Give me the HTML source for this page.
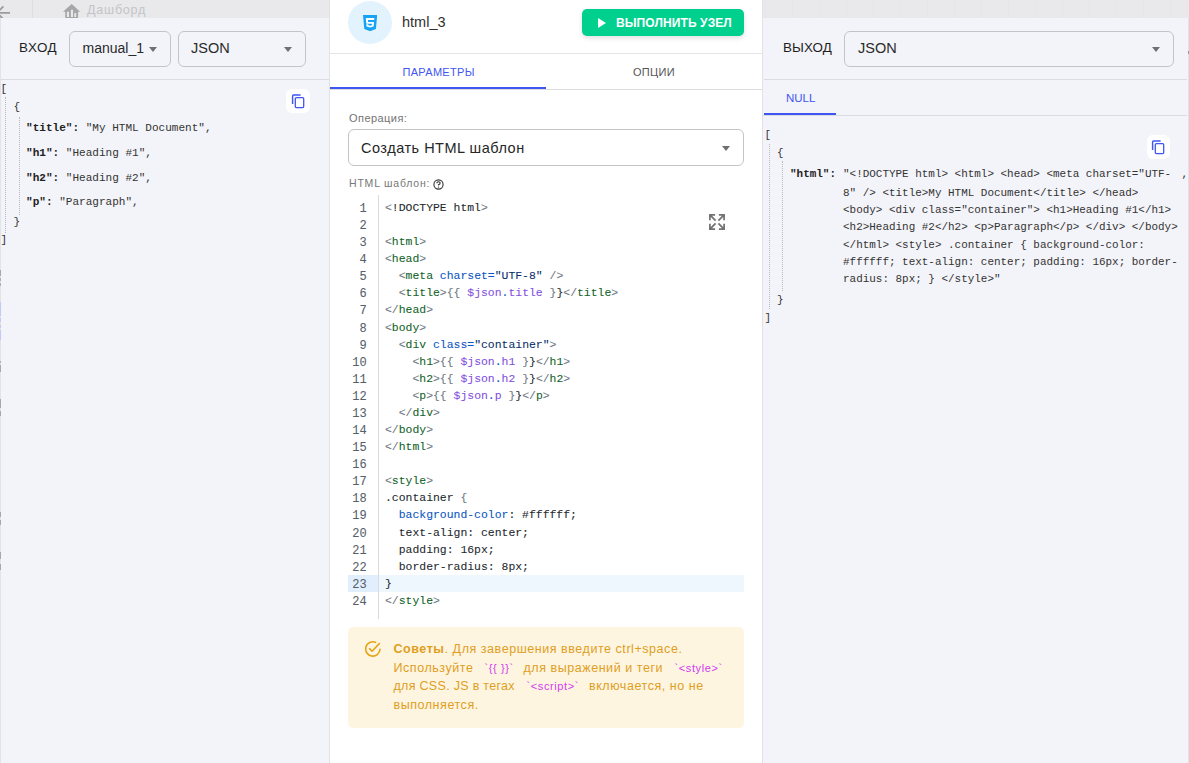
<!DOCTYPE html>
<html><head><meta charset="utf-8">
<style>
*{box-sizing:border-box;margin:0;padding:0}
html,body{width:1189px;height:763px;overflow:hidden;background:#f3f4f9;font-family:"Liberation Sans",sans-serif;color:#222}
.a{position:absolute;white-space:nowrap}
#topbar{left:0;top:0;width:1189px;height:18px;background:#e9e9eb}
#left{left:0;top:18px;width:329px;height:745px;background:#f3f4f9;border-left:1px solid #e3e3e6}
#lsep{left:329px;top:0;width:1px;height:763px;background:#e2e2e4}
#mid{left:330px;top:0;width:432px;height:763px;background:#fff}
#rsep{left:762px;top:0;width:1px;height:763px;background:#e2e2e4}
#right{left:763px;top:18px;width:426px;height:745px;background:#f3f4f9}
.sel{border:1px solid #c4c4c8;border-radius:6px}
.caret{position:absolute;width:0;height:0;border-left:4.5px solid transparent;border-right:4.5px solid transparent;border-top:5px solid #707070}
.mono{font-family:"Liberation Mono",monospace}
.hl{position:absolute;left:0;height:1px}
.code{font-family:"Liberation Mono",monospace;font-size:11.43px;line-height:17px;-webkit-text-stroke:0.08px}
.ln{position:absolute;left:348px;width:18.6px;text-align:right;color:#57606a;font-size:12px;margin-top:2px}
.cl{position:absolute;left:385px;color:#24292f}
.t{color:#116329}.b{color:#6e7781}.at{color:#0a56c2}.s{color:#0a3069}.v{color:#8250df}
.j{font-family:"Liberation Mono",monospace;color:#333}
.jk{font-weight:bold;color:#222}
.tip{font-size:12.5px;line-height:15px;color:#df9e1e;letter-spacing:0.55px}
.tc{font-size:11px;line-height:13px;color:#d33af0;letter-spacing:0.6px}
.dot{position:absolute;width:0;border-left:1px dotted #b9b9bd}
</style></head><body>
<div id="topbar" class="a"></div>
<div id="left" class="a"></div>
<div id="lsep" class="a"></div>
<div id="mid" class="a"></div>
<div id="rsep" class="a"></div>
<div id="right" class="a"></div>

<!-- top bar content -->
<div class="a" style="left:765px;top:0;width:1px;height:18px;background:#e6e6e8"></div><div class="a" style="left:792px;top:0;width:1px;height:18px;background:#e6e6e8"></div><div class="a" style="left:819px;top:0;width:1px;height:18px;background:#e6e6e8"></div><div class="a" style="left:846px;top:0;width:1px;height:18px;background:#e6e6e8"></div><div class="a" style="left:873px;top:0;width:1px;height:18px;background:#e6e6e8"></div><div class="a" style="left:900px;top:0;width:1px;height:18px;background:#e6e6e8"></div><div class="a" style="left:927px;top:0;width:1px;height:18px;background:#e6e6e8"></div><div class="a" style="left:954px;top:0;width:1px;height:18px;background:#e6e6e8"></div><div class="a" style="left:981px;top:0;width:1px;height:18px;background:#e6e6e8"></div><div class="a" style="left:1008px;top:0;width:1px;height:18px;background:#e6e6e8"></div><div class="a" style="left:1035px;top:0;width:1px;height:18px;background:#e6e6e8"></div><div class="a" style="left:1062px;top:0;width:1px;height:18px;background:#e6e6e8"></div><div class="a" style="left:1089px;top:0;width:1px;height:18px;background:#e6e6e8"></div><div class="a" style="left:1116px;top:0;width:1px;height:18px;background:#e6e6e8"></div><div class="a" style="left:1143px;top:0;width:1px;height:18px;background:#e6e6e8"></div><div class="a" style="left:1170px;top:0;width:1px;height:18px;background:#e6e6e8"></div>
<svg class="a" style="left:0;top:0" width="12" height="18" viewBox="0 0 12 18"><path d="M10 12.8H-3M3.4 6.3L-3 12.8L3.4 19.3" stroke="#9c9c9c" stroke-width="1.8" fill="none"/></svg>
<div class="a" style="left:32px;top:0;width:1px;height:18px;background:#dedee0"></div>
<svg class="a" style="left:60px;top:0" width="22" height="18" viewBox="0 0 22 18"><path d="M3 11.7L11.7 3.9L20.2 11.7Z" fill="#a6a6a6"/><rect x="5.2" y="11.2" width="12.9" height="6.8" fill="#a6a6a6"/><rect x="6.9" y="11.8" width="2.1" height="5.2" fill="#e9e9eb"/><rect x="10.9" y="9.8" width="2.1" height="7.2" fill="#e9e9eb"/><rect x="14.3" y="13.1" width="1.9" height="3.9" fill="#e9e9eb"/></svg>
<div class="a" style="left:87px;top:2.5px;font-size:12.6px;color:#c4c4c8;letter-spacing:0.75px">Дашборд</div>

<!-- LEFT PANEL -->
<div class="a" style="left:0;top:269.8px;width:1px;height:6.6px;background:#a8a8aa"></div><div class="a" style="left:0;top:278.3px;width:1px;height:2.7px;background:#b0b0b2"></div><div class="a" style="left:0;top:283.0px;width:1px;height:2.6px;background:#b0b0b2"></div><div class="a" style="left:0;top:302.0px;width:1px;height:14.4px;background:#c4c8f4"></div><div class="a" style="left:0;top:318.3px;width:1px;height:4.0px;background:#c4c8f4"></div><div class="a" style="left:0;top:325.0px;width:1px;height:3.0px;background:#c4c8f4"></div><div class="a" style="left:0;top:330.0px;width:1px;height:10.0px;background:#c4c8f4"></div><div class="a" style="left:0;top:361.3px;width:1px;height:2.0px;background:#b0b0b2"></div><div class="a" style="left:0;top:364.6px;width:1px;height:7.2px;background:#a8a8aa"></div><div class="a" style="left:0;top:399.3px;width:1px;height:9.2px;background:#a8a8aa"></div><div class="a" style="left:0;top:411.0px;width:1px;height:4.7px;background:#a8a8aa"></div><div class="a" style="left:0;top:512.3px;width:1px;height:4.6px;background:#a8a8aa"></div><div class="a" style="left:0;top:519.6px;width:1px;height:5.5px;background:#a8a8aa"></div><div class="a" style="left:0;top:551.7px;width:1px;height:7.3px;background:#a8a8aa"></div><div class="a" style="left:0;top:563.7px;width:1px;height:6.4px;background:#a8a8aa"></div>
<div class="a" style="left:19px;top:40px;font-size:13.4px;color:#1f1f1f;letter-spacing:0.55px">ВХОД</div>
<div class="a sel" style="left:69px;top:31px;width:102px;height:36px"></div>
<div class="a" style="left:82.5px;top:40px;font-size:14px;color:#2a2a2a">manual_1</div>
<div class="caret" style="left:149px;top:46.5px"></div>
<div class="a sel" style="left:178px;top:31px;width:128px;height:36px"></div>
<div class="a" style="left:191px;top:40px;font-size:14.5px;color:#2a2a2a">JSON</div>
<div class="caret" style="left:284px;top:46.5px"></div>
<div class="a" style="left:1px;top:79px;width:328px;height:1px;background:#dcdce0"></div>

<div class="a" style="left:286px;top:89px;width:24px;height:24px;background:#fff;border-radius:6px"></div>
<svg class="a" style="left:286px;top:89px" width="24" height="24" viewBox="0 0 24 24"><path d="M6.6 15V6.9Q6.6 5.9 7.6 5.9H14.6" stroke="#3f56f3" stroke-width="1.45" fill="none"/><rect x="9.3" y="8.6" width="8.4" height="10" rx="1.1" stroke="#3f56f3" stroke-width="1.3" fill="none"/></svg>

<div class="a j" style="left:0.5px;top:81px;font-size:11.1px;line-height:17px">[</div>
<div class="dot" style="left:5px;top:97px;height:136px"></div>
<div class="a j" style="left:13.5px;top:99px;font-size:11.1px;line-height:17px">{</div>
<div class="dot" style="left:19px;top:117px;height:98px"></div>
<div class="a j" style="left:26px;top:120px;font-size:11.06px;line-height:17px"><span class="jk">"title":</span> "My HTML Document",</div>
<div class="a j" style="left:26px;top:145px;font-size:11.06px;line-height:17px"><span class="jk">"h1":</span> "Heading #1",</div>
<div class="a j" style="left:26px;top:170px;font-size:11.06px;line-height:17px"><span class="jk">"h2":</span> "Heading #2",</div>
<div class="a j" style="left:26px;top:194px;font-size:11.06px;line-height:17px"><span class="jk">"p":</span> "Paragraph",</div>
<div class="a j" style="left:13.5px;top:214px;font-size:11.1px;line-height:17px">}</div>
<div class="a j" style="left:0.5px;top:232px;font-size:11.1px;line-height:17px">]</div>

<!-- MIDDLE PANEL -->
<div class="a" style="left:348px;top:0.8px;width:44px;height:43.2px;border-radius:50%;background:#e2f3fe"></div>
<svg class="a" style="left:362.8px;top:14.7px" width="14.2" height="16.2" viewBox="0 0 14.2 16.2"><path d="M0 0H14.2L12.9 14.1L7.1 16.2L1.3 14.1Z" fill="#16a3f5"/><path d="M2.8 3.1H11.4L11.2 5.0H4.9L5.05 6.9H11.05L10.6 11.6L7.1 12.6L3.5 11.6L3.3 9.2H5.2L5.3 10.2L7.1 10.75L8.85 10.2L9.05 8.75H3.3Z" fill="#fff"/></svg>
<div class="a" style="left:402px;top:14px;font-size:14.5px;color:#303030">html_3</div>

<div class="a" style="left:582px;top:9px;width:162px;height:27px;background:#00d08e;border-radius:5px;box-shadow:0 2px 5px rgba(0,0,0,0.13)"></div>
<svg class="a" style="left:598px;top:18px" width="8" height="10" viewBox="0 0 8 10"><path d="M0 0L8 5L0 10Z" fill="#fff"/></svg>
<div class="a" style="left:616px;top:16px;font-size:12px;font-weight:bold;color:#fff;letter-spacing:0.1px">ВЫПОЛНИТЬ УЗЕЛ</div>

<div class="a" style="left:330px;top:53px;width:432px;height:1px;background:#e4e4e7"></div>
<div class="a" style="left:402.5px;top:65.5px;font-size:11px;color:#3f56f3;letter-spacing:0.3px">ПАРАМЕТРЫ</div>
<div class="a" style="left:633px;top:65.5px;font-size:11px;color:#555;letter-spacing:0.3px">ОПЦИИ</div>
<div class="a" style="left:330px;top:89px;width:432px;height:1px;background:#dcdce0"></div>
<div class="a" style="left:330px;top:87px;width:216px;height:2px;background:#3f56f3"></div>

<div class="a" style="left:349px;top:112px;font-size:11px;color:#737373;letter-spacing:0.45px">Операция:</div>
<div class="a sel" style="left:348px;top:129px;width:396px;height:37px"></div>
<div class="a" style="left:361px;top:140px;font-size:14.5px;color:#262626;letter-spacing:0.5px">Создать HTML шаблон</div>
<div class="caret" style="left:722px;top:146px"></div>

<div class="a" style="left:349px;top:177px;font-size:10.5px;color:#777;letter-spacing:0.8px">HTML шаблон:</div>
<svg class="a" style="left:432.5px;top:179px" width="11" height="11" viewBox="0 0 11 11"><circle cx="5.5" cy="5.5" r="4.6" stroke="#333" stroke-width="1.1" fill="none"/><path d="M3.9 4.3Q3.9 2.8 5.5 2.8Q7.1 2.8 7.1 4.2Q7.1 5.1 5.5 5.7V6.6" stroke="#333" stroke-width="1.1" fill="none"/><circle cx="5.5" cy="8.1" r="0.65" fill="#333"/></svg>

<!-- code editor -->
<div class="a" style="left:348px;top:575px;width:30px;height:17px;background:#e1effd"></div>
<div class="a" style="left:379px;top:575px;width:365px;height:17px;background:#eff7fe"></div>
<div class="a" style="left:378px;top:195px;width:1px;height:424px;background:#dadada"></div>
<svg class="a" style="left:708px;top:213px" width="18" height="18" viewBox="0 0 18 18" fill="none" stroke="#737373" stroke-width="1.75"><path d="M1.9 7.2V1.9H7.1M2.2 2.2L7.6 7.6M16.1 7.2V1.9H10.9M15.8 2.2L10.4 7.6M1.9 10.8V16.1H7.1M2.2 15.8L7.6 10.4M16.1 10.8V16.1H10.9M15.8 15.8L10.4 10.4"/></svg>

<div id="code" class="code">
<!--CODE-->
<div class="ln a" style="top:199.0px">1</div>
<div class="cl a" style="top:199.0px;white-space:pre"><span class="b">&lt;</span>!DOCTYPE html<span class="b">&gt;</span></div>
<div class="ln a" style="top:216.08px">2</div>
<div class="ln a" style="top:233.16px">3</div>
<div class="cl a" style="top:233.16px;white-space:pre"><span class="b">&lt;</span><span class="t">html</span><span class="b">&gt;</span></div>
<div class="ln a" style="top:250.24px">4</div>
<div class="cl a" style="top:250.24px;white-space:pre"><span class="b">&lt;</span><span class="t">head</span><span class="b">&gt;</span></div>
<div class="ln a" style="top:267.32px">5</div>
<div class="cl a" style="top:267.32px;white-space:pre">  <span class="b">&lt;</span><span class="t">meta</span> <span class="at">charset=</span><span class="s">&quot;UTF-8&quot;</span><span class="b"> /&gt;</span></div>
<div class="ln a" style="top:284.4px">6</div>
<div class="cl a" style="top:284.4px;white-space:pre">  <span class="b">&lt;</span><span class="t">title</span><span class="b">&gt;</span><span class="b">{{ </span><span class="v">$json</span><span class="at">.</span><span class="v">title</span><span class="b"> }</span>}<span class="b">&lt;/</span><span class="t">title</span><span class="b">&gt;</span></div>
<div class="ln a" style="top:301.48px">7</div>
<div class="cl a" style="top:301.48px;white-space:pre"><span class="b">&lt;/</span><span class="t">head</span><span class="b">&gt;</span></div>
<div class="ln a" style="top:318.56px">8</div>
<div class="cl a" style="top:318.56px;white-space:pre"><span class="b">&lt;</span><span class="t">body</span><span class="b">&gt;</span></div>
<div class="ln a" style="top:335.64px">9</div>
<div class="cl a" style="top:335.64px;white-space:pre">  <span class="b">&lt;</span><span class="t">div</span> <span class="at">class=</span><span class="s">&quot;container&quot;</span><span class="b">&gt;</span></div>
<div class="ln a" style="top:352.72px">10</div>
<div class="cl a" style="top:352.72px;white-space:pre">    <span class="b">&lt;</span><span class="t">h1</span><span class="b">&gt;</span><span class="b">{{ </span><span class="v">$json</span><span class="at">.</span><span class="v">h1</span><span class="b"> }</span>}<span class="b">&lt;/</span><span class="t">h1</span><span class="b">&gt;</span></div>
<div class="ln a" style="top:369.8px">11</div>
<div class="cl a" style="top:369.8px;white-space:pre">    <span class="b">&lt;</span><span class="t">h2</span><span class="b">&gt;</span><span class="b">{{ </span><span class="v">$json</span><span class="at">.</span><span class="v">h2</span><span class="b"> }</span>}<span class="b">&lt;/</span><span class="t">h2</span><span class="b">&gt;</span></div>
<div class="ln a" style="top:386.88px">12</div>
<div class="cl a" style="top:386.88px;white-space:pre">    <span class="b">&lt;</span><span class="t">p</span><span class="b">&gt;</span><span class="b">{{ </span><span class="v">$json</span><span class="at">.</span><span class="v">p</span><span class="b"> }</span>}<span class="b">&lt;/</span><span class="t">p</span><span class="b">&gt;</span></div>
<div class="ln a" style="top:403.96px">13</div>
<div class="cl a" style="top:403.96px;white-space:pre">  <span class="b">&lt;/</span><span class="t">div</span><span class="b">&gt;</span></div>
<div class="ln a" style="top:421.04px">14</div>
<div class="cl a" style="top:421.04px;white-space:pre"><span class="b">&lt;/</span><span class="t">body</span><span class="b">&gt;</span></div>
<div class="ln a" style="top:438.12px">15</div>
<div class="cl a" style="top:438.12px;white-space:pre"><span class="b">&lt;/</span><span class="t">html</span><span class="b">&gt;</span></div>
<div class="ln a" style="top:455.2px">16</div>
<div class="ln a" style="top:472.28px">17</div>
<div class="cl a" style="top:472.28px;white-space:pre"><span class="b">&lt;</span><span class="t">style</span><span class="b">&gt;</span></div>
<div class="ln a" style="top:489.36px">18</div>
<div class="cl a" style="top:489.36px;white-space:pre">.container <span class="b">{</span></div>
<div class="ln a" style="top:506.44px">19</div>
<div class="cl a" style="top:506.44px;white-space:pre">  <span class="at">background-color</span>: #ffffff;</div>
<div class="ln a" style="top:523.52px">20</div>
<div class="cl a" style="top:523.52px;white-space:pre">  text-align: center;</div>
<div class="ln a" style="top:540.6px">21</div>
<div class="cl a" style="top:540.6px;white-space:pre">  padding: 16px;</div>
<div class="ln a" style="top:557.68px">22</div>
<div class="cl a" style="top:557.68px;white-space:pre">  border-radius: 8px;</div>
<div class="ln a" style="top:574.76px">23</div>
<div class="cl a" style="top:574.76px;white-space:pre">}</div>
<div class="ln a" style="top:591.84px">24</div>
<div class="cl a" style="top:591.84px;white-space:pre"><span class="b">&lt;/</span><span class="t">style</span><span class="b">&gt;</span></div>
<!--/CODE-->
</div>

<!-- tips -->
<div class="a" style="left:348px;top:627px;width:396px;height:101px;background:#fef5e0;border-radius:5px"></div>
<svg class="a" style="left:364px;top:640px" width="18" height="18" viewBox="0 0 18 18" fill="none" stroke="#e3a417" stroke-width="1.6" stroke-linecap="round" stroke-linejoin="round"><path d="M16 9.3A7.2 7.2 0 1 1 11.6 2.3"/><path d="M5.6 8.6L8 11.2L15.3 3.6"/></svg>
<div class="tip a" style="left:393.5px;top:642px"><b>Советы</b>. Для завершения введите ctrl+space.</div>
<div class="tip a" style="left:393.5px;top:661px">Используйте</div>
<div class="tc a" style="left:484.5px;top:661.5px">`{{ }}`</div>
<div class="tip a" style="left:523.5px;top:661px">для выражений и теги</div>
<div class="tc a" style="left:674.5px;top:661.5px">`&lt;style&gt;`</div>
<div class="tip a" style="left:393.5px;top:679px;letter-spacing:0.3px">для CSS. JS в тегах</div>
<div class="tc a" style="left:526.5px;top:679.5px">`&lt;script&gt;`</div>
<div class="tip a" style="left:589px;top:679px">включается, но не</div>
<div class="tip a" style="left:393.5px;top:697.5px">выполняется.</div>

<!-- RIGHT PANEL -->
<div class="a" style="left:783px;top:40px;font-size:13.4px;color:#1f1f1f;letter-spacing:0.1px">ВЫХОД</div>
<div class="a sel" style="left:844px;top:31px;width:330px;height:36px"></div>
<div class="a" style="left:858px;top:40px;font-size:14.5px;color:#2a2a2a">JSON</div>
<div class="caret" style="left:1152px;top:46.5px"></div>
<div class="a" style="left:764px;top:79px;width:423px;height:1px;background:#dcdce0"></div>
<div class="a" style="left:786px;top:91.5px;font-size:11.5px;color:#3f56f3">NULL</div>
<div class="a" style="left:763px;top:115px;width:424px;height:1px;background:#dcdce0"></div>
<div class="a" style="left:764px;top:113px;width:72px;height:2px;background:#3f56f3"></div>
<div class="a" style="left:1188px;top:18px;width:1px;height:745px;background:#e2e2e5"></div>
<div class="a" style="left:1188px;top:51px;width:1px;height:3px;background:#999"></div>

<div class="a" style="left:1147px;top:135px;width:23px;height:24px;background:#fff;border-radius:6px"></div>
<svg class="a" style="left:1145.6px;top:135px" width="24" height="24" viewBox="0 0 24 24"><path d="M6.6 15V6.9Q6.6 5.9 7.6 5.9H14.6" stroke="#3f56f3" stroke-width="1.45" fill="none"/><rect x="9.3" y="8.6" width="8.4" height="10" rx="1.1" stroke="#3f56f3" stroke-width="1.3" fill="none"/></svg>

<div class="a j" style="left:764.5px;top:126.5px;font-size:10.95px;line-height:17px">[</div>
<div class="dot" style="left:769px;top:144px;height:165px"></div>
<div class="a j" style="left:777px;top:145px;font-size:10.95px;line-height:17px">{</div>
<div class="dot" style="left:782px;top:161px;height:130px"></div>
<div class="a j" style="left:790px;top:165.5px;font-size:10.95px;line-height:17.3px"><span class="jk">"html":</span> </div>
<div class="a j" style="left:843px;top:166px;font-size:10.95px;line-height:17.3px;white-space:pre">"&lt;!DOCTYPE html&gt; &lt;html&gt; &lt;head&gt; &lt;meta charset="UTF-</div>
<div class="a j" style="left:843px;top:184.8px;font-size:10.95px;line-height:17.3px;white-space:pre">8" /&gt; &lt;title&gt;My HTML Document&lt;/title&gt; &lt;/head&gt;
&lt;body&gt; &lt;div class="container"&gt; &lt;h1&gt;Heading #1&lt;/h1&gt;
&lt;h2&gt;Heading #2&lt;/h2&gt; &lt;p&gt;Paragraph&lt;/p&gt; &lt;/div&gt; &lt;/body&gt;
&lt;/html&gt; &lt;style&gt; .container { background-color:
#ffffff; text-align: center; padding: 16px; border-
radius: 8px; } &lt;/style&gt;"</div>
<div class="a j" style="left:1181.5px;top:166px;font-size:10.95px;line-height:17.3px">,</div>
<div class="a j" style="left:777px;top:292px;font-size:10.95px;line-height:17px">}</div>
<div class="a j" style="left:764.5px;top:310px;font-size:10.95px;line-height:17px">]</div>

</body></html>
